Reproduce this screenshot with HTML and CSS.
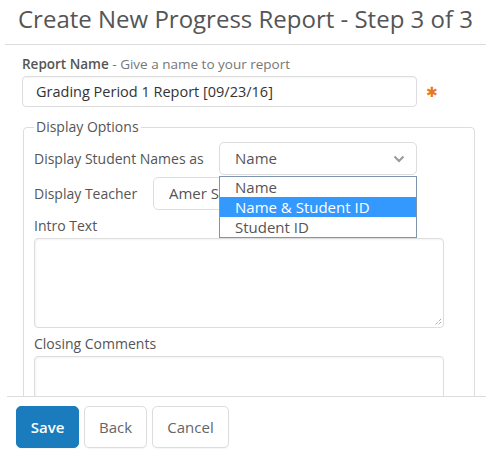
FILE: index.html
```html
<!DOCTYPE html>
<html>
<head>
<meta charset="utf-8">
<link rel="stylesheet" href="styles.css">
</head>
<body>
<div class="page">
  <main class="main">
    <h1 class="title">Create New Progress Report - Step 3 of 3</h1>
    <div class="rule"></div>
    <div class="form">
      <div class="field-label"><b>Report Name</b> - Give a name to your report</div>
      <div class="name-row">
        <div class="input">Grading Period 1 Report [09/23/16]</div>
        <span class="required">&#x2731;</span>
      </div>
      <fieldset class="options">
        <legend class="legend">Display Options</legend>
        <div class="row">
          <span class="row-label">Display Student Names as</span>
          <div class="select-wrap">
            <div class="select select-names">
              <span>Name</span>
              <svg class="chev" width="12" height="8" viewBox="0 0 12 8"><path d="M1.5 1.5 L6 6 L10.5 1.5" fill="none" stroke="#999" stroke-width="2"/></svg>
            </div>
            <ul class="dropdown">
              <li>Name</li>
              <li class="active">Name &amp; Student ID</li>
              <li>Student ID</li>
            </ul>
          </div>
        </div>
        <div class="row">
          <span class="row-label">Display Teacher</span>
          <div class="select select-teacher"><span>Amer Smith</span></div>
        </div>
        <div class="block-label">Intro Text</div>
        <div class="textarea intro"><svg class="grip" width="9" height="9" viewBox="0 0 9 9"><path d="M8 2 L2 8 M8 5 L5 8" stroke="#888" stroke-width="1" stroke-dasharray="1 1"/></svg></div>
        <div class="block-label">Closing Comments</div>
        <div class="textarea closing"></div>
      </fieldset>
    </div>
  </main>
  <footer class="footer">
    <button class="btn btn-primary">Save</button>
    <button class="btn btn-back">Back</button>
    <button class="btn btn-cancel">Cancel</button>
  </footer>
</div>
</body>
</html>
```
FILE: styles.css
```css
html, body {
  margin: 0;
  padding: 0;
  background: #fff;
}
body {
  font-family: "Open Sans", "Liberation Sans", sans-serif;
  color: #555;
}
.page {
  height: 460px;
  display: flex;
  flex-direction: column;
  overflow: hidden;
}
.main {
  height: 396px;
  overflow: hidden;
  flex: none;
}
.title {
  margin: 0;
  padding: 4px 0 0 18px;
  font-size: 24px;
  font-weight: 400;
  line-height: 30px;
  color: #555;
  white-space: nowrap;
}
.rule {
  margin: 10px 0 0 5px;
  border-top: 1px solid #ddd;
}
.form {
  padding: 10px 0 0 22px;
}
.field-label {
  font-size: 13.5px;
  line-height: 18px;
  color: #777;
}
.field-label b {
  font-weight: 600;
  color: #555;
}
.name-row {
  display: flex;
  align-items: center;
  margin-top: 3px;
}
.input {
  box-sizing: border-box;
  width: 395px;
  height: 31px;
  border: 1px solid #ddd;
  border-radius: 4px;
  padding: 0 13px;
  font-size: 14.5px;
  line-height: 29px;
  color: #333;
  box-shadow: inset 0 1px 1px rgba(0,0,0,0.04);
}
.required {
  margin-left: 9px;
  color: #e87722;
  font-size: 14px;
  line-height: 14px;
}
.options {
  box-sizing: border-box;
  width: 452px;
  margin: 10px 0 0 1px;
  border: 1px solid #ddd;
  border-radius: 4px;
  padding: 5px 10px 10px 10px;
  height: 300px;
}
.legend {
  font-size: 14px;
  line-height: 20px;
  padding: 0 2px;
  color: #555;
}
.row {
  display: flex;
  align-items: center;
  margin-bottom: 2px;
}
.row-label {
  font-size: 14px;
  width: 185px;
  flex: none;
  color: #555;
}
.row:nth-of-type(2) .row-label {
  width: 119px;
}
.select-wrap {
  position: relative;
}
.select {
  box-sizing: border-box;
  height: 33px;
  border: 1px solid #ddd;
  border-radius: 5px;
  padding: 0 15px;
  font-size: 15px;
  line-height: 31px;
  color: #555;
  display: flex;
  align-items: center;
  justify-content: space-between;
  overflow: hidden;
  white-space: nowrap;
}
.select-names {
  width: 198px;
}
.select-teacher {
  width: 150px;
}
.chev {
  margin-right: -4px;
}
.dropdown {
  position: absolute;
  left: 0;
  top: 34px;
  width: 198px;
  box-sizing: border-box;
  margin: 0;
  padding: 0;
  list-style: none;
  background: #fff;
  border: 1px solid #7f95b0;
  font-size: 15px;
  line-height: 20px;
  color: #555;
  z-index: 2;
}
.dropdown li {
  padding: 0 15px;
}
.dropdown li.active {
  background: #3399ff;
  color: #fff;
}
.block-label {
  font-size: 14px;
  line-height: 20px;
  margin-top: 6px;
  color: #555;
}
.textarea {
  box-sizing: border-box;
  width: 410px;
  border: 1px solid #ddd;
  border-radius: 4px;
  margin-top: 2px;
  position: relative;
  box-shadow: inset 1px 1px 2px rgba(0,0,0,0.05);
}
.intro {
  height: 90px;
}
.closing {
  height: 90px;
}
.grip {
  position: absolute;
  right: 1px;
  bottom: 1px;
}
.footer {
  margin-left: 7px;
  border-top: 1px solid #ddd;
  padding: 9px 0 0 9px;
  display: flex;
  gap: 5px;
}
.btn {
  box-sizing: border-box;
  font-family: "Open Sans", "Liberation Sans", sans-serif;
  font-size: 15px;
  height: 42px;
  padding: 0;
  border: 1px solid #ddd;
  border-radius: 5px;
  background: #fff;
  color: #666;
  box-shadow: 0 1px 1px rgba(0,0,0,0.04);
  text-align: center;
}
.btn-primary {
  background: #1a7bbd;
  border-color: #1a7bbd;
  color: #fff;
  font-weight: 600;
  width: 63px;
}
.btn-back {
  width: 63px;
}
.btn-cancel {
  width: 77px;
}
```
